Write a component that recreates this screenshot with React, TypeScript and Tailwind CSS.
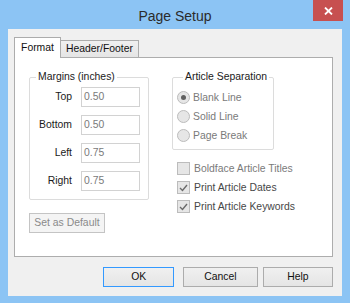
import React from "react";

const Radio = ({ label, checked }: { label: string; checked?: boolean }) => (
  <div className="flex items-center h-[19px]">
    <span className="w-[13px] h-[13px] rounded-full border border-[#bcbcbc] bg-[#e6e6e6] flex items-center justify-center">
      {checked && <span className="w-[5px] h-[5px] rounded-full bg-[#606060]" />}
    </span>
    <span className="ml-[3px] text-[#7a7a7a]">{label}</span>
  </div>
);

const Check = ({ label, checked, dim }: { label: string; checked?: boolean; dim?: boolean }) => (
  <div className="flex items-center h-[19px]">
    <span className="w-[13px] h-[13px] border border-[#bcbcbc] bg-[#e6e6e6] flex items-center justify-center">
      {checked && (
        <svg width="9" height="8" viewBox="0 0 9 8">
          <polyline points="1,4 3.5,6.5 8,1" fill="none" stroke="#6a6a6a" strokeWidth="1.4" />
        </svg>
      )}
    </span>
    <span className={dim ? "ml-[4px] text-[#7a7a7a]" : "ml-[4px] text-[#474747]"}>{label}</span>
  </div>
);

const Field = ({ label, value }: { label: string; value: string }) => (
  <div className="flex items-center h-[20px]">
    <span className="w-[42px] text-right text-[#1a1a1a]">{label}</span>
    <div className="ml-[9px] w-[59px] h-[20px] border border-[#d2d2d2] bg-white flex items-center pl-[2px] text-[#7a7a7a]">
      {value}
    </div>
  </div>
);

const Btn = ({ label, primary, className }: { label: string; primary?: boolean; className?: string }) => (
  <button
    className={
      (primary ? "border-[#3399ff] " : "border-[#acacac] ") +
      "h-[20px] border bg-gradient-to-b from-[#f0f0f0] to-[#e5e5e5] text-[#111] flex items-center justify-center " +
      (className ?? "")
    }
  >
    {label}
  </button>
);

export default function App() {
  return (
    <div className="w-[350px] h-[303px] bg-[#8cc4f4] flex flex-col font-['Liberation_Sans',Arial,sans-serif] text-[10.4px] leading-[12px] overflow-hidden">
      <div className="relative h-[29px] flex items-center justify-center pt-[2px]">
        <span className="text-[14px] leading-[16px] text-[#2b2b2b]">Page Setup</span>
        <div className="absolute right-[7px] top-0 w-[30px] h-[21px] bg-[#c75050] flex items-center justify-center">
          <svg width="9" height="8" viewBox="0 0 9 8">
            <path d="M1 0.5 L8 7.5 M8 0.5 L1 7.5" stroke="#fff" strokeWidth="1.8" />
          </svg>
        </div>
      </div>

      <div className="mx-[8px] h-[267px] bg-[#f0f0f0] flex flex-col pt-[8px] pl-[6px] pr-[9px]">
        <div className="flex items-end h-[21px] relative z-10">
          <div className="w-[47px] h-[21px] bg-white border border-b-0 border-[#acacac] flex items-center justify-center text-[#111] pb-[1px]">
            Format
          </div>
          <div className="h-[17px] -ml-px px-[5px] mb-px bg-gradient-to-b from-[#f0f0f0] to-[#e5e5e5] border border-b-0 border-[#acacac] flex items-center text-[#111]">
            Header/Footer
          </div>
        </div>

        <div className="-mt-px h-[200px] bg-white border border-[#adadad] flex pl-[14px] pt-[13px]">
          <div className="w-[120px] flex flex-col">
            <fieldset className="border border-[#dcdcdc] rounded-[2px] px-0 pb-[8px]">
              <legend className="ml-[6px] px-[2px] text-[#1a1a1a]">Margins (inches)</legend>
              <div className="flex flex-col gap-[8px] pt-[4px]">
                <Field label="Top" value="0.50" />
                <Field label="Bottom" value="0.50" />
                <Field label="Left" value="0.75" />
                <Field label="Right" value="0.75" />
              </div>
            </fieldset>
            <div className="mt-[13px] w-[76px] h-[20px] border border-[#c4c4c4] bg-[#f4f4f4] flex items-center justify-center text-[#8a8a8a]">
              Set as Default
            </div>
          </div>

          <div className="ml-[23px] flex flex-col">
            <fieldset className="w-[102px] border border-[#dcdcdc] rounded-[2px] pl-[4px] pb-[4px]">
              <legend className="ml-[6px] px-[2px] text-[#1a1a1a]">Article Separation</legend>
              <div className="flex flex-col pt-[5px]">
                <Radio label="Blank Line" checked />
                <Radio label="Solid Line" />
                <Radio label="Page Break" />
              </div>
            </fieldset>
            <div className="mt-[9px] pl-[5px] flex flex-col">
              <Check label="Boldface Article Titles" dim />
              <Check label="Print Article Dates" checked />
              <Check label="Print Article Keywords" checked />
            </div>
          </div>
        </div>

        <div className="flex mt-[10px] pl-[89px]">
          <Btn label="OK" primary className="w-[72px]" />
          <Btn label="Cancel" className="ml-[9px] w-[75px]" />
          <Btn label="Help" className="ml-[5px] w-[71px]" />
        </div>
      </div>
    </div>
  );
}
